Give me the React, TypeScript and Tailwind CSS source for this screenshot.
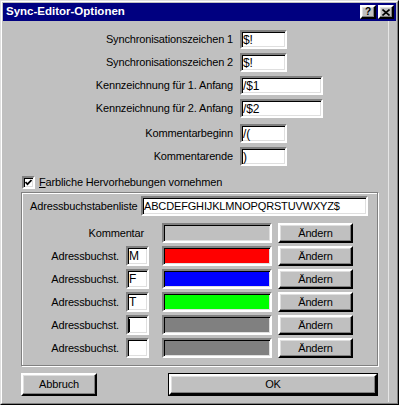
const sunken =
    'border-2 border-t-[#808080] border-l-[#808080] border-r-white border-b-white shadow-[inset_1px_1px_0_#000,inset_-1px_-1px_0_#dfdfdf]';
const raised =
    'border-2 border-t-white border-l-white border-r-black border-b-black shadow-[inset_-1px_-1px_0_#808080,inset_1px_1px_0_#dfdfdf]';

function TopRow({ label, value, width, className }: { label: string; value: string; width: string; className?: string }) {
    return (
        <div className={`flex items-center h-[19px] ${className ?? ''}`}>
            <span className="w-[230px] text-right">{label}</span>
            <div className={`ml-[7px] h-[19px] ${width} bg-white ${sunken} flex items-center pl-px text-[12px]`}>{value}</div>
        </div>
    );
}

function ChangeButton() {
    return (
        <button className={`ml-[6px] w-[75px] h-[20px] bg-[#c0c0c0] ${raised} flex items-center justify-center`}>
            Ändern
        </button>
    );
}

function ColorRow({ letter, color, caret }: { letter: string; color: string; caret?: boolean }) {
    return (
        <div className="flex items-center h-[20px]">
            <span className="w-[97px] text-right">Adressbuchst.</span>
            <div className={`ml-[7px] w-[23px] h-[20px] bg-white ${sunken} flex items-center pl-px`}>
                {caret ? <span className="w-px h-[13px] bg-black" /> : <span className="text-[12px]">{letter}</span>}
            </div>
            <div className={`ml-[13px] w-[110px] h-[20px] ${color} ${sunken}`} />
            <ChangeButton />
        </div>
    );
}

export default function App() {
    return (
        <div className="w-[399px] h-[405px] bg-[#c0c0c0] text-black text-[11px] tracking-[-0.15px] font-['Liberation_Sans',Arial,sans-serif] border border-t-[#dfdfdf] border-l-[#dfdfdf] border-r-black border-b-black">
            <div className="h-full p-px flex flex-col border border-t-white border-l-white border-r-[#808080] border-b-[#808080]">

                {/* title bar */}
                <div className="h-[18px] shrink-0 bg-[#000080] flex items-center pl-[3px] pr-[2px]">
                    <span className="text-white font-bold text-[11.5px] tracking-normal">Sync-Editor-Optionen</span>
                    <div className="ml-auto flex gap-[2px]">
                        <button className={`w-[16px] h-[14px] bg-[#c0c0c0] ${raised} flex items-center justify-center font-bold text-[10px] leading-none`}>
                            ?
                        </button>
                        <button className={`w-[16px] h-[14px] bg-[#c0c0c0] ${raised} flex items-center justify-center`}>
                            <svg width="8" height="7" viewBox="0 0 8 7">
                                <path d="M0.5 0.5 L7.5 6.5 M7.5 0.5 L0.5 6.5" stroke="black" strokeWidth="1.6" />
                            </svg>
                        </button>
                    </div>
                </div>

                <div className="flex-1 flex">
                    <div className="w-[386px] border-r border-[#e6e6e6] flex flex-col pt-[9px]">
                        <TopRow label="Synchronisationszeichen 1" value="$!" width="w-[47px]" />
                        <TopRow label="Synchronisationszeichen 2" value="$!" width="w-[47px]" className="mt-[4px]" />
                        <TopRow label="Kennzeichnung für 1. Anfang" value="/$1" width="w-[83px]" className="mt-[4px]" />
                        <TopRow label="Kennzeichnung für 2. Anfang" value="/$2" width="w-[83px]" className="mt-[4px]" />
                        <TopRow label="Kommentarbeginn" value="/(" width="w-[47px]" className="mt-[6px]" />
                        <TopRow label="Kommentarende" value=")" width="w-[47px]" className="mt-[4px]" />

                        <div className="mt-[10px] ml-[19px] h-[13px] flex items-center">
                            <div className={`w-[13px] h-[13px] bg-white ${sunken} flex items-center justify-center`}>
                                <svg width="7" height="7" viewBox="0 0 7 7">
                                    <path d="M0.5 3 L2.5 5.2 L6.5 1" fill="none" stroke="black" strokeWidth="1.7" />
                                </svg>
                            </div>
                            <span className="ml-[4px]">
                                <span className="underline">F</span>arbliche Hervorhebungen vornehmen
                            </span>
                        </div>

                        <div className="mt-[3px] ml-[18px] w-[357px] h-[174px] border border-[#808080] shadow-[inset_1px_1px_0_#fff,1px_1px_0_#fff] flex flex-col pt-[3px]">
                            <div className="flex items-center h-[20px] pl-[8px]">
                                <span className="w-[111px]">Adressbuchstabenliste</span>
                                <div className={`w-[227px] h-[20px] bg-white ${sunken} flex items-center pl-px`}>
                                    ABCDEFGHIJKLMNOPQRSTUVWXYZ$
                                </div>
                            </div>

                            <div className="mt-[7px] flex flex-col gap-[3px]">
                                <div className="flex items-center h-[20px]">
                                    <span className="w-[122px] text-right">Kommentar</span>
                                    <div className={`ml-[18px] w-[110px] h-[20px] bg-[#c0c0c0] ${sunken}`} />
                                    <ChangeButton />
                                </div>
                                <ColorRow letter="M" color="bg-[#ff0000]" />
                                <ColorRow letter="F" color="bg-[#0000ff]" />
                                <ColorRow letter="T" color="bg-[#00ff00]" />
                                <ColorRow letter="" color="bg-[#808080]" caret />
                                <ColorRow letter="" color="bg-[#808080]" />
                            </div>
                        </div>

                        <div className="mt-[7px] flex">
                            <button className={`ml-[18px] w-[76px] h-[23px] bg-[#c0c0c0] ${raised} flex items-center justify-center`}>
                                Abbruch
                            </button>
                            <div className="ml-[71px] w-[210px] h-[23px] border border-black">
                                <button className={`w-full h-full bg-[#c0c0c0] ${raised} flex items-center justify-center`}>
                                    OK
                                </button>
                            </div>
                        </div>
                    </div>
                </div>
            </div>
        </div>
    );
}
